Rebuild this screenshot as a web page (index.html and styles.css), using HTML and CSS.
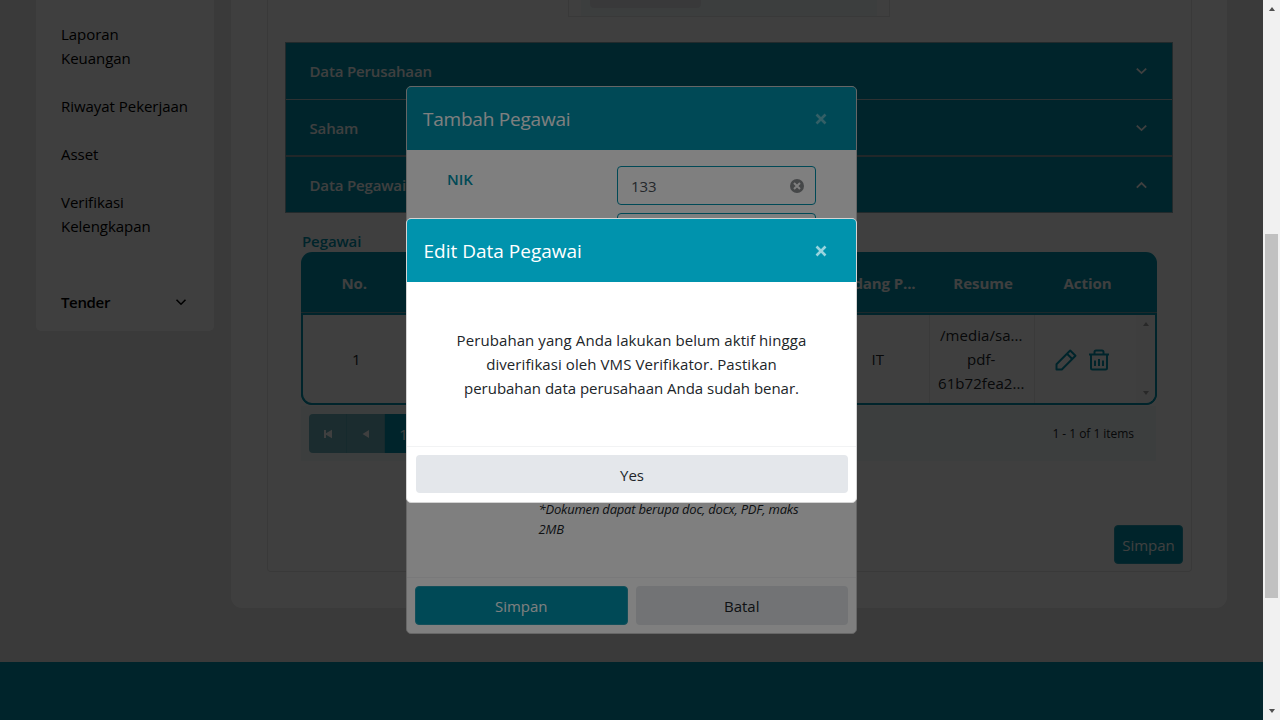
FILE: index.html
```html
<!DOCTYPE html>
<html lang="id">
<head>
<meta charset="utf-8">
<title>Data Pegawai</title>
<link rel="stylesheet" href="styles.css">
</head>
<body>
<div class="app">
  <div class="viewport">
    <div class="columns">
      <nav class="sidebar">
        <a class="nav-item">Laporan<br>Keuangan</a>
        <a class="nav-item">Riwayat Pekerjaan</a>
        <a class="nav-item">Asset</a>
        <a class="nav-item">Verifikasi<br>Kelengkapan</a>
        <a class="nav-group"><span>Tender</span>
          <svg width="12" height="8" viewBox="0 0 12 8"><path d="M1.500 1.700 6 6.200l4.500-4.500" fill="none" stroke="#000" stroke-width="1.600"/></svg>
        </a>
      </nav>
      <main class="content">
        <section class="panel">
          <div class="upload"><div class="upload-inner"><div class="upload-chip"></div></div></div>
          <div class="accordion">
            <div class="acc-row"><span>Data Perusahaan</span><svg width="12" height="8" viewBox="0 0 12 8"><path d="M1.800 1.600 6.500 6.100l4.700-4.500" fill="none" stroke="#fff" stroke-width="1.800"/></svg></div>
            <div class="acc-row"><span>Saham</span><svg width="12" height="8" viewBox="0 0 12 8"><path d="M1.800 1.600 6.500 6.100l4.700-4.500" fill="none" stroke="#fff" stroke-width="1.800"/></svg></div>
            <div class="acc-row"><span>Data Pegawai</span><svg width="12" height="8" viewBox="0 0 12 8"><path d="M1.800 6.600 6.500 2.100l4.700 4.500" fill="none" stroke="#fff" stroke-width="1.800"/></svg></div>
          </div>
          <div class="employees">
            <div class="grid-label">Pegawai</div>
            <div class="grid">
              <div class="grid-head">
                <div class="th th-no">No.</div><div></div><div></div><div></div><div></div>
                <div class="th th-field">Bidang P...</div><div class="th th-last">Resume</div><div class="th th-last">Action</div>
              </div>
              <div class="grid-body">
                <div class="td td-no">1</div><div></div><div></div><div></div><div></div>
                <div class="td">IT</div>
                <div class="td td-line resume"><span>/media/sa...</span><span>pdf-</span><span>61b72fea2...</span></div>
                <div class="td td-line actions">
                  <svg width="22" height="22" viewBox="0 0 22 22" fill="none" stroke="#0093ad" stroke-width="2" stroke-linejoin="round"><path d="M1.500 20.500v-5.300L15.200 1.500l5.300 5.300L6.800 20.500zM12 4.700l5.300 5.300"/></svg>
                  <svg width="22" height="22" viewBox="0 0 22 22" fill="none" stroke="#0093ad" stroke-width="2" stroke-linejoin="round"><path d="M1 5.500h20M3 5.500v13.500q0 1.500 1.500 1.500h13q1.500 0 1.500-1.500V5.500M6.500 5.500V3q0-1.500 1.500-1.500h6q1.500 0 1.500 1.500v2.500M7 11.500v5.500M11 10v7M15 11.500v5.500"/></svg>
                </div>
                <div class="mini-scroll"><i class="tri tri-up"></i><i class="tri tri-down"></i></div>
              </div>
            </div>
            <div class="pager">
              <div class="pager-buttons">
                <div class="pg"><svg width="10" height="10" viewBox="0 0 10 10"><path d="M1 1h2v3.300L9 .8v8.400L3 5.700V9H1z" fill="#fff"/></svg></div>
                <div class="pg"><svg width="10" height="10" viewBox="0 0 10 10"><path d="M8 1v8L1.500 5z" fill="#fff"/></svg></div>
                <div class="pg pg-on">1</div>
              </div>
              <div class="pager-info">1 - 1 of 1 items</div>
            </div>
          </div>
          <div class="panel-foot"><button class="btn btn-main">Simpan</button></div>
        </section>
      </main>
    </div>
    <footer class="footer"></footer>

    <div class="backdrop"></div>
    <div class="modal modal-add">
      <div class="modal-head"><span class="title-add">Tambah Pegawai</span>
        <svg class="close" width="12" height="12" viewBox="0 0 12 12"><path d="M1.500 1.500l9 9M10.500 1.500l-9 9" stroke="#fff" stroke-width="2.600"/></svg></div>
      <div class="modal-form">
        <div class="field-label">NIK</div>
        <div class="fields">
          <div class="input"><span>133</span>
            <svg width="14" height="14" viewBox="0 0 14 14"><circle cx="7" cy="7" r="7" fill="#8b8e91"/><path d="M4 4l6 6M10 4l-6 6" stroke="#fff" stroke-width="2"/></svg></div>
          <div class="input"></div>
        </div>
      </div>
      <div class="note"><span>*Dokumen dapat berupa doc, docx, PDF, maks</span><span>2MB</span></div>
      <div class="modal-foot"><button class="btn btn-main">Simpan</button><button class="btn btn-soft">Batal</button></div>
    </div>
    <div class="backdrop"></div>
    <div class="modal modal-edit">
      <div class="modal-head"><span class="title-edit">Edit Data Pegawai</span>
        <svg class="close" width="12" height="12" viewBox="0 0 12 12"><path d="M1.500 1.500l9 9M10.500 1.500l-9 9" stroke="#fff" stroke-width="2.600"/></svg></div>
      <div class="message"><span>Perubahan yang Anda lakukan belum aktif hingga</span><span>diverifikasi oleh VMS Verifikator. Pastikan</span><span class="message-end">perubahan data perusahaan Anda sudah benar.</span></div>
      <div class="modal-foot"><button class="btn btn-soft">Yes</button></div>
    </div>
  </div>
  <div class="scrollbar"><i class="tri tri-up"></i><div class="thumb"></div><i class="tri tri-down"></i></div>
</div>
</body>
</html>
```
FILE: styles.css
```css
* { box-sizing: border-box; }
body { margin: 0; font: 15px/24px "Open Sans", "Noto Sans", sans-serif; letter-spacing: -0.04px; color: #212529; overflow: hidden; }
svg { display: block; flex: none; }
.app { display: flex; width: 1280px; height: 720px; }
.viewport { position: relative; width: 1263px; height: 720px; overflow: hidden; background: #e8e8e8; }
.columns { display: flex; align-items: flex-start; gap: 17.5px; height: 662px; padding-left: 36px; }
.footer { height: 58px; background: #0093ad; }

.sidebar { width: 177.5px; height: 331px; padding: 22px 25px 0; background: #fff; border-radius: 0 0 5px 5px; color: #000; }
.nav-item { display: block; margin-bottom: 24px; white-space: nowrap; }
.nav-group { display: flex; align-items: center; justify-content: space-between; margin-top: 52px; padding-right: 2px; font-weight: 600; letter-spacing: -0.35px; }

.content { width: 996px; height: 608px; padding: 0 35px 0 36px; background: #fff; border-radius: 0 0 11px 11px; }
.panel { width: 925px; height: 572px; padding: 0 17px; border: 1px solid #e6e6e6; border-top: 0; border-radius: 0 0 4px 4px; }
.upload { width: 322px; height: 17px; margin-left: 283px; padding: 0 12px; border: 1px solid #e6e6e6; border-top: 0; }
.upload-inner { height: 16px; padding-left: 9px; background: #f3faf9; }
.upload-chip { width: 111px; height: 8px; background: #e4e7eb; border-radius: 0 0 4px 4px; }
.accordion { width: 888px; margin-top: 25px; border: 1px solid #8aa9b1; background: #0093ad; }
.acc-row { display: flex; align-items: center; justify-content: space-between; height: 57px; padding: 0 25px 0 23.5px; border-bottom: 1px solid #b4c6ca; color: #fff; font-weight: 600; letter-spacing: -0.15px; }
.acc-row:nth-child(2) { border-bottom: 2px solid #859fa5; }
.acc-row:last-child { height: 55px; border: 0; }
.employees { width: 855px; margin-left: 16px; }
.grid-label { margin-top: 16px; height: 23px; padding-left: 1px; line-height: 24px; color: #0093ad; font-weight: 600; letter-spacing: -0.1px; }
.grid { height: 153px; margin-right: -1px; border-radius: 11px; overflow: hidden; background: #0093ad; }
.grid-head, .grid-body { display: grid; grid-template-columns: repeat(8, 104.5px) 1fr; }
.grid-head { height: 61px; padding: 1px 0 0 2px; border-bottom: 1px solid #70a3ad; color: #fff; font-weight: 700; }
.th { display: flex; align-items: center; justify-content: center; white-space: nowrap; }
.th-no { padding-right: 2px; }
.th-field { padding-right: 1px; letter-spacing: -0.1px; }
.th-last { padding-left: 1.5px; }
.grid-body { height: 92px; border: 2px solid #0093ad; border-radius: 0 0 11px 11px; background: #fff; overflow: hidden; }
.td { display: flex; flex-direction: column; align-items: center; justify-content: center; white-space: nowrap; }
.td-no { padding-left: 2px; }
.td-line { margin-left: -1px; margin-right: 1px; border-left: 1px solid #ebebeb; }
.td-line.resume { padding-right: 1px; letter-spacing: 0.06px; }
.td-line.actions { flex-direction: row; gap: 11px; padding: 2px 8px 0 0; }
.mini-scroll { display: flex; flex-direction: column; justify-content: space-between; align-items: center; margin-left: -3px; padding: 7px 0 8px; background: #f9f9f9; }
.tri { width: 0; height: 0; border: 3.500px solid transparent; }
.tri-up { border-top: 0; border-bottom: 4px solid #a3a3a3; }
.tri-down { border-bottom: 0; border-top: 4px solid #a3a3a3; }
.pager { display: flex; align-items: center; justify-content: space-between; height: 55px; padding: 0 22px 0 8px; background: #f3faf9; margin-top: 1px; }
.pager-buttons { display: flex; height: 39px; border-radius: 4px; overflow: hidden; }
.pg { display: flex; align-items: center; justify-content: center; width: 38px; background: #6db1bd; border-right: 1px solid #5aa9b6; color: #fff; }
.pg-on { background: #0093ad; }
.pager-info { padding-top: 1px; font-size: 12px; }
.panel-foot { display: flex; justify-content: flex-end; margin-top: 64px; margin-right: -9px; }

.btn { display: block; height: 39px; padding: 1px 0 0; border: 1px solid transparent; border-radius: 4px; font: inherit; letter-spacing: inherit; text-align: center; }
.btn-main { background: #0093ad; border-color: #269fb5; color: #fff; }
.btn-soft { background: #e4e7eb; color: #212529; }
.panel-foot .btn { width: 69px; }

.backdrop { position: absolute; inset: 0; background: rgba(0, 0, 0, .5); }
.modal { position: absolute; left: 406px; width: 451px; display: flex; flex-direction: column; background: #fff; border: 1px solid #ccc; border-radius: 5px; overflow: hidden; }
.modal-add { top: 86px; height: 548px; }
.modal-edit { top: 218px; height: 285px; border-color: #d4d4d4; }
.modal-head { display: flex; align-items: center; justify-content: space-between; flex: none; height: 63px; padding: 0 29px 0 16px; background: #0093ad; color: #fff; font-size: 19px; }
.title-add { letter-spacing: -0.22px; }
.title-edit { padding-left: 0.5px; letter-spacing: 0; }
.close { opacity: .4; }
.modal-edit .close { opacity: .6; margin-right: 0.5px; }
.modal-form { display: flex; padding: 16px 40px 0; height: 342px; }
.field-label { width: 170px; padding-top: 1px; color: #0093ad; font-weight: 600; }
.fields { display: flex; flex-direction: column; gap: 8px; width: 199px; }
.input { display: flex; align-items: center; justify-content: space-between; height: 39px; padding: 0 11px 0 13px; border: 1px solid #0093ad; border-radius: 4px; color: #495057; }
.note { display: flex; flex-direction: column; margin: 7px 0 0 131.5px; font-size: 13px; line-height: 20px; letter-spacing: -0.2px; font-style: italic; white-space: nowrap; }
.modal-foot { display: flex; gap: 8px; height: 56px; margin-top: auto; padding: 8px; border-top: 1px solid #f2f3f4; }
.modal-foot .btn { flex: 1; }
.modal-edit .modal-foot .btn { height: 38px; margin-left: 1px; padding-top: 2px; }
.message { display: flex; flex-direction: column; align-items: center; padding-top: 46px; letter-spacing: 0.08px; white-space: nowrap; }
.message-end { letter-spacing: -0.02px; }

.scrollbar { display: flex; flex-direction: column; align-items: center; width: 17px; height: 720px; padding: 7px 0; background: #f1f1f1; }
.scrollbar .tri-up { border-bottom-color: #505050; }
.scrollbar .tri-down { border-top-color: #505050; margin-top: auto; }
.thumb { width: 13px; height: 364px; margin-top: 223px; background: #c1c1c1; }
```
